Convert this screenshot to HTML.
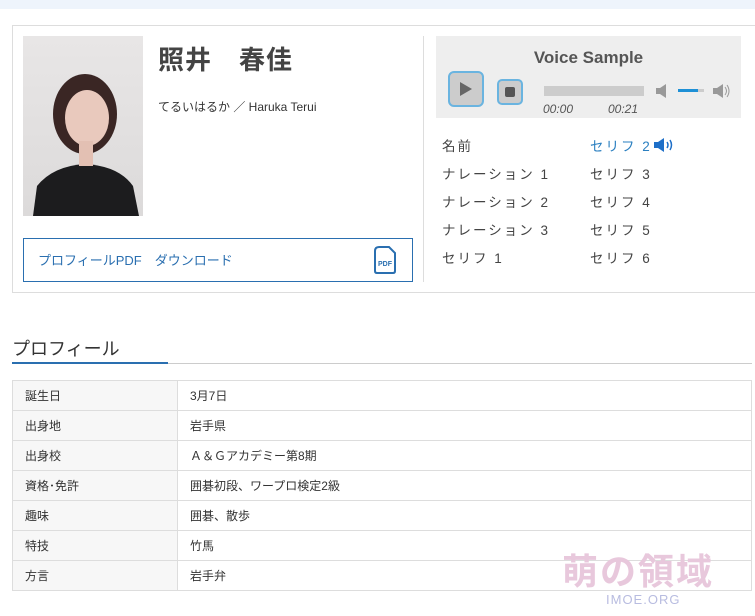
<!DOCTYPE html>
<html><head><meta charset="utf-8"><style>
*{margin:0;padding:0;box-sizing:border-box}
body{width:755px;height:616px;background:#fff;font-family:"Liberation Sans","Noto Sans CJK JP",sans-serif;color:#333;position:relative;overflow:hidden}
.a{position:absolute}
.top{left:0;top:0;width:755px;height:9px;background:#eef4fc}
.card{left:12px;top:25px;width:745px;height:268px;border:1px solid #ddd}
.photo{left:23px;top:36px;width:120px;height:180px;background:linear-gradient(#e8e6e6,#dcdada)}
.name{left:158px;top:40px;font-size:26px;font-weight:bold;color:#444;letter-spacing:1px}
.sub{left:158px;top:98px;font-size:12px;color:#333}
.pdf{left:23px;top:238px;width:390px;height:44px;border:1px solid #2a6fb0;color:#2a6fb0;font-size:13px;padding:11px 0 0 14px}
.vline{left:423px;top:36px;width:1px;height:246px;background:#ddd}
.vs{left:436px;top:36px;width:305px;height:82px;background:#eee}
.row{font-size:13.5px;color:#444;letter-spacing:2px}
h2{position:absolute;left:12px;top:335px;font-size:18px;font-weight:normal;color:#333}
table{position:absolute;left:12px;top:380px;width:740px;border-collapse:collapse;font-size:12px}
td{border:1px solid #ddd;height:30px;padding-left:12px}
td:first-child{width:165px;background:#f7f7f7}
</style></head><body>
<div class="a top"></div>
<div class="a card"></div>
<div class="a photo">
<svg width="120" height="180"><ellipse cx="62" cy="78" rx="32" ry="40" fill="#3a2624"/><ellipse cx="64" cy="82" rx="22" ry="28" fill="#e9c9bd"/><path d="M10 180 L14 150 Q30 130 62 128 Q96 130 110 150 L116 180Z" fill="#1c1c1e"/><rect x="56" y="105" width="14" height="25" fill="#e3c0b3"/></svg>
</div>
<div class="a name">照井　春佳</div>
<div class="a sub">てるいはるか ／ Haruka Terui</div>
<div class="a pdf">プロフィールPDF　ダウンロード</div>
<svg class="a" style="left:373px;top:245px" width="24" height="30"><path d="M6 2 H16 L22 8 V26 Q22 28 20 28 H4 Q2 28 2 26 V6 Q2 2 6 2Z" fill="#fff" stroke="#2a6fb0" stroke-width="2"/><text x="5" y="21" font-size="7" font-weight="bold" fill="#2a6fb0" font-family="Liberation Sans">PDF</text></svg>
<div class="a vline"></div>
<div class="a vs"></div>
<div class="a" style="left:436px;top:48px;width:305px;text-align:center;font-size:17px;font-weight:bold;color:#555">Voice Sample</div>
<div class="a" style="left:448px;top:71px;width:36px;height:36px;border:2px solid #6ab4e0;border-radius:6px;background:#ccc"></div>
<svg class="a" style="left:459px;top:82px" width="14" height="14"><path d="M1 0 L13 7 L1 14Z" fill="#666"/></svg>
<div class="a" style="left:497px;top:79px;width:26px;height:26px;border:2px solid #6ab4e0;border-radius:5px;background:#ccc"></div>
<div class="a" style="left:505px;top:87px;width:10px;height:10px;border-radius:2px;background:#555"></div>
<div class="a" style="left:544px;top:86px;width:100px;height:10px;background:#ccc"></div>
<div class="a" style="left:543px;top:102px;font-size:12px;font-style:italic;color:#555">00:00</div>
<div class="a" style="left:608px;top:102px;font-size:12px;font-style:italic;color:#555">00:21</div>
<svg class="a" style="left:656px;top:84px" width="12" height="14"><path d="M0 4H4L10 0V14L4 10H0Z" fill="#999"/></svg>
<div class="a" style="left:678px;top:89px;width:26px;height:3px;background:#ccc"></div>
<div class="a" style="left:678px;top:89px;width:20px;height:3px;background:#1e90d6"></div>
<svg class="a" style="left:713px;top:83px" width="18" height="16"><path d="M0 5H4L10 1V15L4 11H0Z" fill="#999"/><path d="M12 4Q15 8 12 12M14 2Q18 8 14 14" stroke="#999" fill="none"/></svg>
<div class="a row" style="left:442px;top:135px">名前</div>
<div class="a row" style="left:442px;top:163px">ナレーション 1</div>
<div class="a row" style="left:442px;top:191px">ナレーション 2</div>
<div class="a row" style="left:442px;top:219px">ナレーション 3</div>
<div class="a row" style="left:442px;top:247px">セリフ 1</div>
<div class="a row" style="left:590px;top:135px;color:#2a7fc0">セリフ 2</div>
<svg class="a" style="left:654px;top:138px" width="20" height="14"><path d="M0 4H4L10 0V14L4 10H0Z" fill="#1e6fc8"/><path d="M13 4Q15 7 13 10M16 2Q19 7 16 12" stroke="#1e6fc8" fill="none" stroke-width="1.5"/></svg>
<div class="a row" style="left:590px;top:163px">セリフ 3</div>
<div class="a row" style="left:590px;top:191px">セリフ 4</div>
<div class="a row" style="left:590px;top:219px">セリフ 5</div>
<div class="a row" style="left:590px;top:247px">セリフ 6</div>
<h2>プロフィール</h2>
<div class="a" style="left:12px;top:363px;width:740px;height:1px;background:#ccc"></div>
<div class="a" style="left:12px;top:362px;width:156px;height:2px;background:#2a6fb0"></div>
<table>
<tr><td>誕生日</td><td>3月7日</td></tr>
<tr><td>出身地</td><td>岩手県</td></tr>
<tr><td>出身校</td><td>Ａ＆Ｇアカデミー第8期</td></tr>
<tr><td>資格･免許</td><td>囲碁初段、ワープロ検定2級</td></tr>
<tr><td>趣味</td><td>囲碁、散歩</td></tr>
<tr><td>特技</td><td>竹馬</td></tr>
<tr><td>方言</td><td>岩手弁</td></tr>
</table>
<div class="a" style="left:562px;top:543px;font-size:36px;font-weight:bold;color:#e8c8dc;letter-spacing:2px">萌の領域</div>
<div class="a" style="left:606px;top:592px;font-size:13px;color:#b8bce0;letter-spacing:1px">IMOE.ORG</div>
</body></html>
